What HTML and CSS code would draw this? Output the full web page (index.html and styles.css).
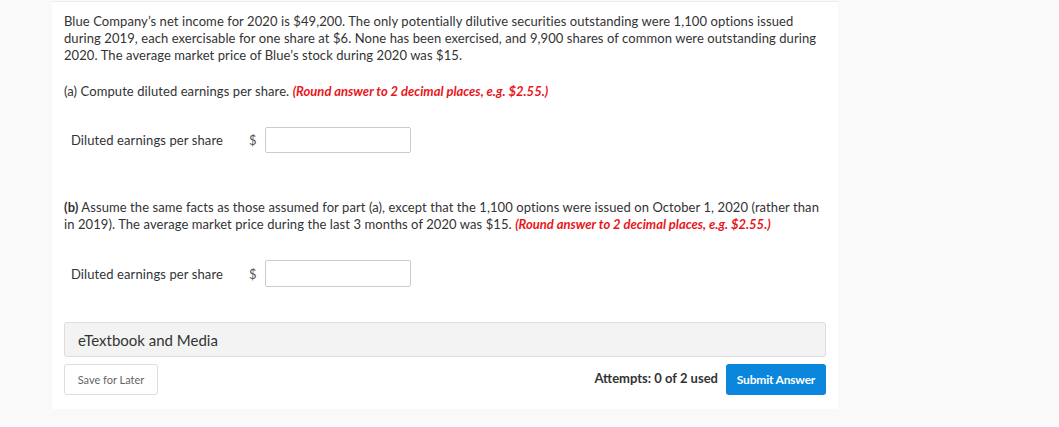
FILE: index.html
```html
<!DOCTYPE html>
<html>
<head>
<meta charset="utf-8">
<link rel="stylesheet" href="styles.css">
</head>
<body>
<div class="page">
  <div class="card">
    <p class="text">Blue Company’s net income for 2020 is $49,200. The only potentially dilutive securities outstanding were 1,100 options issued during 2019, each exercisable for one share at $6. None has been exercised, and 9,900 shares of common were outstanding during 2020. The average market price of Blue’s stock during 2020 was $15.</p>
    <p class="text q-a">(a) Compute diluted earnings per share. <span class="hint">(Round answer to 2 decimal places, e.g. $2.55.)</span></p>
    <div class="row row-a">
      <span class="label">Diluted earnings per share</span>
      <span class="dollar">$</span>
      <input class="field" type="text">
    </div>
    <p class="text q-b"><b>(b)</b> Assume the same facts as those assumed for part (a), except that the 1,100 options were issued on October 1, 2020 (rather than in 2019). The average market price during the last 3 months of 2020 was $15. <span class="hint">(Round answer to 2 decimal places, e.g. $2.55.)</span></p>
    <div class="row row-b">
      <span class="label">Diluted earnings per share</span>
      <span class="dollar">$</span>
      <input class="field" type="text">
    </div>
    <div class="media">eTextbook and Media</div>
    <div class="actions">
      <button class="save">Save for Later</button>
      <div class="right">
        <span class="attempts">Attempts: 0 of 2 used</span>
        <button class="submit">Submit Answer</button>
      </div>
    </div>
  </div>
</div>
</body>
</html>
```
FILE: styles.css
```css
html, body {
  margin: 0;
  padding: 0;
  background: #f9f9f9;
}
body {
  font-family: Lato, "Open Sans", sans-serif;
  color: #333;
}
.page {
  padding: 1px 0 0 52px;
}
.card {
  width: 762px;
  background: #fff;
  border-top: 1px solid #ececec;
  padding: 11px 12px 14px 12px;
}
.text {
  margin: 0;
  font-size: 13px;
  line-height: 17px;
  letter-spacing: 0.08px;
}
.q-a {
  margin-top: 19px;
}
.hint {
  color: #e8161b;
  font-weight: bold;
  font-style: italic;
  letter-spacing: 0;
}
.q-b b {
  font-weight: bold;
}
.row {
  display: flex;
  align-items: center;
  padding-left: 7px;
  font-size: 13px;
  letter-spacing: 0.1px;
}
.row-a {
  margin-top: 27px;
}
.row-b {
  margin-top: 27px;
}
.q-b {
  margin-top: 46px;
}
.label {
  width: 178px;
  color: #333;
}
.dollar {
  width: 16px;
  color: #555;
  font-size: 13px;
}
.field {
  width: 146px;
  height: 26px;
  box-sizing: border-box;
  border: 1px solid #ccc;
  border-radius: 2px;
  margin: 0;
  padding: 0 4px;
  background: #fff;
}
.row-b .field {
  height: 27px;
}
.media {
  margin-top: 35px;
  height: 35px;
  box-sizing: border-box;
  background: #f3f3f3;
  border: 1px solid #ddd;
  border-radius: 3px;
  padding: 0 13px;
  display: flex;
  align-items: center;
  font-size: 15px;
  color: #333;
}
.actions {
  margin-top: 7px;
  display: flex;
  justify-content: space-between;
  align-items: center;
}
.save {
  height: 31px;
  width: 94px;
  box-sizing: border-box;
  background: #fff;
  border: 1px solid #ddd;
  border-radius: 3px;
  font-family: Lato, sans-serif;
  font-size: 11px;
  color: #666;
  padding: 0;
}
.right {
  display: flex;
  align-items: center;
  gap: 8px;
}
.attempts {
  font-size: 13px;
  font-weight: bold;
  color: #333;
  margin-bottom: 3px;
}
.submit {
  height: 31px;
  width: 100px;
  box-sizing: border-box;
  background: #0a87dc;
  border: none;
  border-radius: 3px;
  color: #fff;
  font-family: Lato, sans-serif;
  font-size: 12px;
  font-weight: bold;
  padding: 0;
  letter-spacing: -0.2px;
}
```
